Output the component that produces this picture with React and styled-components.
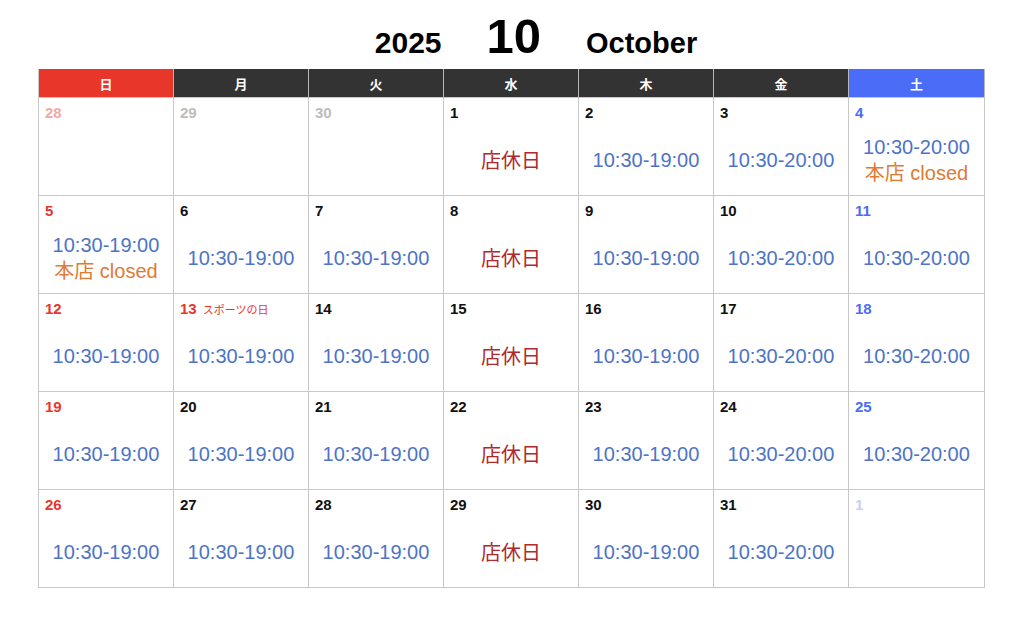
import React from 'react'
import styled, { createGlobalStyle } from 'styled-components'

const GlobalStyle = createGlobalStyle`
    body {
        margin: 0;
        background: #fff;
        font-family: "Liberation Sans", "Noto Sans CJK JP", sans-serif;
    }
`

const WEEKDAYS = [
    { label: '日', tone: 'sun' },
    { label: '月', tone: 'day' },
    { label: '火', tone: 'day' },
    { label: '水', tone: 'day' },
    { label: '木', tone: 'day' },
    { label: '金', tone: 'day' },
    { label: '土', tone: 'sat' },
]

const H19 = '10:30-19:00'
const H20 = '10:30-20:00'
const OFF = 'off'
const MAIN_CLOSED = 'main'

// each cell: [day, kind, lines, holiday]
const WEEKS = [
    [[28, 'prevSun'], [29, 'prev'], [30, 'prev'], [1, 'day', [OFF]], [2, 'day', [H19]], [3, 'day', [H20]], [4, 'sat', [H20, MAIN_CLOSED]]],
    [[5, 'sun', [H19, MAIN_CLOSED]], [6, 'day', [H19]], [7, 'day', [H19]], [8, 'day', [OFF]], [9, 'day', [H19]], [10, 'day', [H20]], [11, 'sat', [H20]]],
    [[12, 'sun', [H19]], [13, 'sun', [H19], 'スポーツの日'], [14, 'day', [H19]], [15, 'day', [OFF]], [16, 'day', [H19]], [17, 'day', [H20]], [18, 'sat', [H20]]],
    [[19, 'sun', [H19]], [20, 'day', [H19]], [21, 'day', [H19]], [22, 'day', [OFF]], [23, 'day', [H19]], [24, 'day', [H20]], [25, 'sat', [H20]]],
    [[26, 'sun', [H19]], [27, 'day', [H19]], [28, 'day', [H19]], [29, 'day', [OFF]], [30, 'day', [H19]], [31, 'day', [H20]], [1, 'nextSat']],
]

function Line({ value }) {
    if (value === OFF) return <Closed>店休日</Closed>
    if (value === MAIN_CLOSED) return <MainClosed>本店 closed</MainClosed>
    return <Hours>{value}</Hours>
}

function App() {
    return (
        <>
            <GlobalStyle />
            <Page>
                <Title>
                    <Year>2025</Year>
                    <Month>10</Month>
                    <MonthName>October</MonthName>
                </Title>
                <Calendar>
                    {WEEKDAYS.map(w => (
                        <HeadCell key={w.label} tone={w.tone}>{w.label}</HeadCell>
                    ))}
                    {WEEKS.flat().map(([day, kind, lines = [], holiday], i) => (
                        <Cell key={i}>
                            <DateRow>
                                <DayNum kind={kind}>{day}</DayNum>
                                {holiday && <Holiday>{holiday}</Holiday>}
                            </DateRow>
                            <Content>
                                {lines.map((l, j) => <Line key={j} value={l} />)}
                            </Content>
                        </Cell>
                    ))}
                </Calendar>
            </Page>
        </>
    )
}

export default App

const Page = styled.div`
    width: 946px;
    padding: 0 38px;
`
const Title = styled.div`
    display: flex;
    align-items: baseline;
    justify-content: center;
    gap: 45px;
    height: 69px;
    padding-left: 50px;
    box-sizing: border-box;
    padding-top: 12px;
    color: #000;
    font-weight: bold;
    line-height: 1;
`
const Year = styled.span`
    font-size: 30px;
`
const Month = styled.span`
    font-size: 49px;
`
const MonthName = styled.span`
    font-size: 29px;
`
const Calendar = styled.div`
    display: grid;
    grid-template-columns: repeat(6, 135px) 136px;
    grid-auto-rows: 98px;
    grid-template-rows: 29px;
    border-left: 1px solid #c8c8c8;
`
const headBg = { sun: '#e8372a', sat: '#4a6cf7', day: '#333333' }
const HeadCell = styled.div`
    display: flex;
    align-items: center;
    justify-content: center;
    background: ${p => headBg[p.tone]};
    color: #fff;
    font-size: 13px;
    font-weight: bold;
    border-right: 1px solid #b8b8b8;
    border-bottom: 1px solid #c8c8c8;
    box-sizing: border-box;
`
const Cell = styled.div`
    display: flex;
    flex-direction: column;
    border-right: 1px solid #c8c8c8;
    border-bottom: 1px solid #c8c8c8;
    box-sizing: border-box;
    padding: 6px 6px 0 6px;
`
const DateRow = styled.div`
    display: flex;
    align-items: baseline;
    gap: 6px;
    height: 20px;
`
const dayColor = {
    day: '#111',
    sun: '#e8372a',
    sat: '#4a6cf7',
    prev: '#bdbdbd',
    prevSun: '#f4a9a6',
    nextSat: '#c6cff5',
}
const DayNum = styled.span`
    font-size: 15px;
    font-weight: bold;
    color: ${p => dayColor[p.kind]};
`
const Holiday = styled.span`
    font-size: 11px;
    color: #e8372a;
`
const Content = styled.div`
    flex: 1;
    display: flex;
    flex-direction: column;
    align-items: center;
    justify-content: center;
    padding-top: 1px;
    line-height: 26px;
`
const Hours = styled.div`
    font-size: 20px;
    color: #4d74c6;
`
const Closed = styled.div`
    font-size: 20px;
    color: #b3282c;
    font-family: "Noto Sans CJK JP", sans-serif;
`
const MainClosed = styled.div`
    font-size: 20px;
    color: #e07a34;
`
